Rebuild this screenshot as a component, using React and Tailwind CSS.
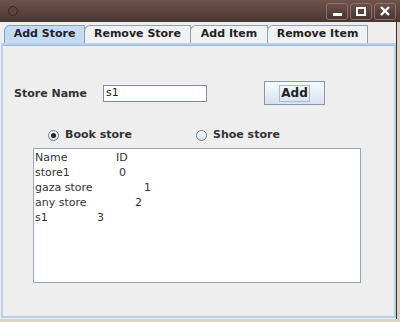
import React from 'react';

const tabs = ["Add Store", "Remove Store", "Add Item", "Remove Item"];
const tabWidths = ["w-[81px]", "w-[107px]", "w-[78px]", "w-[101px]"];

const rows = [
  { name: "Name", id: "ID", w: "w-[81px]" },
  { name: "store1", id: "0", w: "w-[84px]" },
  { name: "gaza store", id: "1", w: "w-[109px]" },
  { name: "any store", id: "2", w: "w-[100px]" },
  { name: "s1", id: "3", w: "w-[62px]" },
];

function WinButton({ children }) {
  return (
    <div className="w-[22px] h-[17px] rounded-[3px] border border-[#8a726a] bg-gradient-to-b from-[#6a5048] to-[#4a3630] flex items-center justify-center">
      {children}
    </div>
  );
}

function Radio({ checked, label }) {
  return (
    <div className="flex items-center gap-[6px]">
      <div className="w-[11px] h-[11px] rounded-full border border-[#6f7f90] bg-gradient-to-b from-[#ffffff] to-[#d8e0ea] flex items-center justify-center">
        {checked && <div className="w-[5px] h-[5px] rounded-full bg-[#222]" />}
      </div>
      <span className="font-bold text-[11px] text-[#333]">{label}</span>
    </div>
  );
}

function App() {
  return (
    <div className="w-[400px] h-[322px] bg-[#dcd3c4] overflow-hidden" style={{ fontFamily: '"DejaVu Sans", sans-serif' }}>
      <div className="h-[22px] bg-gradient-to-b from-[#6e544b] to-[#4b3730] flex items-center justify-between pl-[8px] pr-[4px]">
        <div className="w-[10px] h-[10px] rounded-full border border-[#3a2a24] bg-[#5a443c]" />
        <div className="flex gap-[2px]">
          <WinButton>
            <div className="w-[9px] h-[3px] bg-white mt-[6px]" />
          </WinButton>
          <WinButton>
            <div className="w-[10px] h-[9px] border-2 border-white" />
          </WinButton>
          <WinButton>
            <svg width="10" height="10" viewBox="0 0 10 10">
              <path d="M1 1 L9 9 M9 1 L1 9" stroke="white" strokeWidth="2.4" />
            </svg>
          </WinButton>
        </div>
      </div>
      <div className="w-[397px] h-[297px] bg-[#eeeeee] border-r border-[#3a2c26] pt-[3px]">
        <div className="flex pl-[4px] h-[18px]">
          {tabs.map((t, i) => (
            <div
              key={t}
              className={`${tabWidths[i]} h-[18px] flex items-center justify-center border border-b-0 rounded-tl-[6px] text-[11px] font-bold text-[#222] ${
                i === 0 ? "bg-[#c6daf2] border-[#7f9fc6]" : "bg-[#f0f2f4] border-[#8ea0b4] -ml-px"
              }`}
            >
              {t}
            </div>
          ))}
        </div>
        <div className="ml-[1px] w-[395px] h-[275px] border-2 border-[#b9d0ec] bg-[#eeeeee]">
          <div className="h-px bg-[#9fb6d4]" />
          <div className="flex items-center mt-[35px] h-[24px]">
            <span className="ml-[11px] w-[89px] font-bold text-[11px] text-[#333] mt-[3px]">Store Name</span>
            <div className="w-[104px] h-[17px] bg-white border border-[#7f8ea0] flex items-center pl-[2px] text-[11px] text-[#222]">
              s1
            </div>
            <div className="ml-[57px] w-[61px] h-[24px] border border-[#8796ad] bg-gradient-to-b from-[#f8fbfe] to-[#d6e2ee] flex items-center justify-center">
              <span className="border border-[#a8bcd4] px-[1px] h-[17px] flex items-center font-bold text-[12px] text-[#222]">Add</span>
            </div>
          </div>
          <div className="flex items-center mt-[24px] h-[12px]">
            <div className="ml-[45px] w-[148px]">
              <Radio checked label="Book store" />
            </div>
            <Radio label="Shoe store" />
          </div>
          <div className="ml-[30px] mt-[7px] w-[328px] h-[135px] bg-white border border-[#9aa6b6] pt-[2px] pl-[1px]">
            {rows.map((r) => (
              <div key={r.name} className="flex h-[15px] items-center text-[11px] text-[#333]">
                <span className={`${r.w} whitespace-nowrap`}>{r.name}</span>
                <span>{r.id}</span>
              </div>
            ))}
          </div>
        </div>
      </div>
    </div>
  );
}

export default App;
